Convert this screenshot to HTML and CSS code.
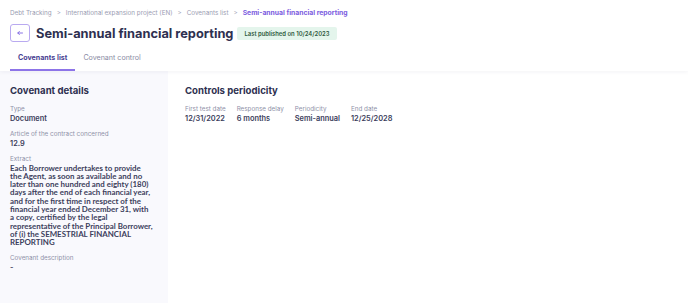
FILE: index.html
```html
<!DOCTYPE html>
<html lang="en">
<head>
    <meta charset="UTF-8">
    <meta name="viewport" content="width=device-width, initial-scale=1.0">
    <title>Semi-annual financial reporting</title>
    <link rel="stylesheet" href="styles.css">
</head>
<body>
    <div class="header">
        <div class="breadcrumb">
            <span>Debt Tracking</span>
            <span class="sep">&gt;</span>
            <span>International expansion project (EN)</span>
            <span class="sep">&gt;</span>
            <span>Covenants list</span>
            <span class="sep">&gt;</span>
            <span class="current">Semi-annual financial reporting</span>
        </div>

        <div class="title-row">
            <button class="back">
                <svg width="8" height="8" viewBox="0 0 8 8">
                    <path d="M6.5 4H1.8M3.4 2.4L1.8 4L3.4 5.6" fill="none" stroke="#7b62e0" stroke-width="0.9" stroke-linecap="round" stroke-linejoin="round"/>
                </svg>
            </button>
            <h1>Semi-annual financial reporting</h1>
            <span class="badge">Last published on 10/24/2023</span>
        </div>

        <div class="tabs">
            <div class="tab active">Covenants list</div>
            <div class="tab">Covenant control</div>
        </div>
    </div>

    <div class="content">
        <div class="sidebar">
            <h2>Covenant details</h2>
            <div class="field">
                <div class="label">Type</div>
                <div class="value">Document</div>
            </div>
            <div class="field">
                <div class="label">Article of the contract concerned</div>
                <div class="value">12.9</div>
            </div>
            <div class="field">
                <div class="label">Extract</div>
                <div class="value extract">Each Borrower undertakes to provide the Agent, as soon as available and no later than one hundred and eighty (180) days after the end of each financial year, and for the first time in respect of the financial year ended December 31, with a copy, certified by the legal representative of the Principal Borrower, of (i) the SEMESTRIAL FINANCIAL REPORTING</div>
            </div>
            <div class="field">
                <div class="label">Covenant description</div>
                <div class="value">-</div>
            </div>
        </div>

        <div class="main">
            <h2>Controls periodicity</h2>
            <div class="periods">
                <div class="field">
                    <div class="label">First test date</div>
                    <div class="value">12/31/2022</div>
                </div>
                <div class="field">
                    <div class="label">Response delay</div>
                    <div class="value">6 months</div>
                </div>
                <div class="field">
                    <div class="label">Periodicity</div>
                    <div class="value">Semi-annual</div>
                </div>
                <div class="field">
                    <div class="label">End date</div>
                    <div class="value">12/25/2028</div>
                </div>
            </div>
        </div>
    </div>
</body>
</html>
```

FILE: styles.css
```css
body {
    margin: 0;
    font-family: Inter, "Noto Sans", sans-serif;
    color: #2e3050;
    background-color: white;
    height: 303px;
    display: flex;
    flex-direction: column;
}
.header {
    padding: 8px 10px 0;
    background-color: white;
    box-shadow: 0 1px 4px rgba(40, 40, 90, 0.06);
    position: relative;
    z-index: 1;
}
.breadcrumb {
    font-size: 6.3px;
    color: #9a9cb2;
    display: flex;
    align-items: baseline;
    gap: 5px;
    line-height: 10px;
}
.breadcrumb .current {
    color: #7b5ce0;
    font-weight: 700;
    font-size: 6.8px;
}
.title-row {
    display: flex;
    align-items: center;
    margin-top: 6px;
}
.back {
    width: 20px;
    height: 18px;
    border: 1px solid #b9aaf0;
    border-radius: 3px;
    background-color: white;
    padding: 0;
    display: flex;
    align-items: center;
    justify-content: center;
}
h1 {
    margin: 0 4px 0 6px;
    font-size: 12.8px;
    font-weight: 700;
    color: #2e3050;
}
.badge {
    background-color: #e4f5ec;
    color: #2f5a40;
    font-size: 5.9px;
    font-weight: 600;
    padding: 3px 7px;
    border-radius: 2px;
    line-height: 7px;
}
.tabs {
    display: flex;
    margin-top: 5px;
}
.tab {
    font-size: 7.1px;
    color: #8a8ca4;
    padding: 6px 8px 7px;
    border-bottom: 2px solid transparent;
}
.tab.active {
    color: #4a3f93;
    font-weight: 700;
    border-bottom-color: #8d74e8;
}
.content {
    flex: 1;
    display: flex;
}
.sidebar {
    width: 144px;
    background-color: #f9f9fd;
    padding: 14px 14px 10px 10px;
}
.main {
    flex: 1;
    padding: 14px 17px;
}
h2 {
    margin: 0 0 9px;
    font-size: 9.6px;
    font-weight: 700;
    color: #2e3050;
}
.field {
    margin-bottom: 7.5px;
}
.label {
    font-size: 6.3px;
    color: #8f91a8;
    line-height: 8.5px;
}
.value {
    font-size: 7.4px;
    font-weight: 600;
    color: #3c3e5c;
    line-height: 9px;
}
.value.extract {
    font-family: Lato, Inter, sans-serif;
    font-weight: 700;
    font-size: 7.9px;
    line-height: 8.3px;
    margin-bottom: 8px;
}
.periods {
    display: flex;
    gap: 11px;
}
```
